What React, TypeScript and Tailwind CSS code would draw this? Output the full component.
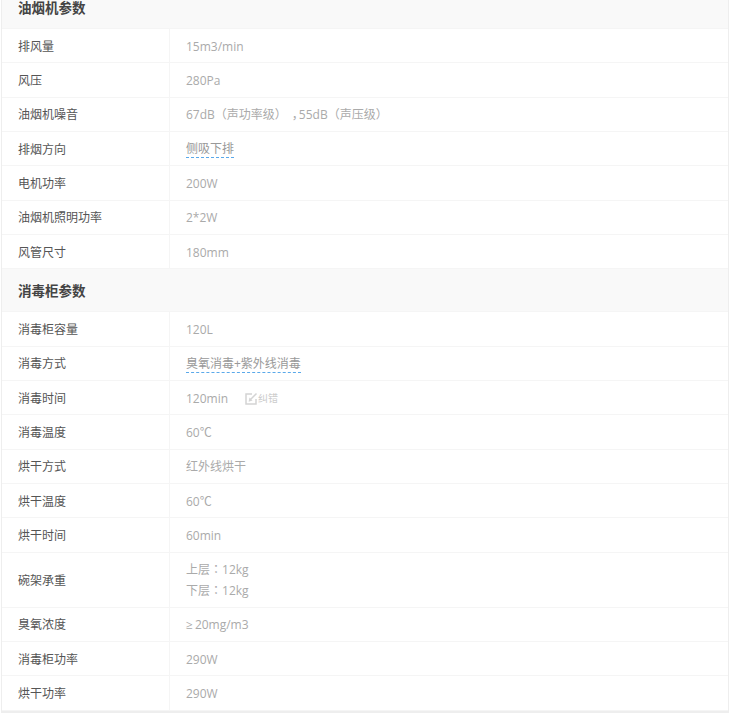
const F = { fontFamily: '"Open Sans","Noto Sans CJK SC",sans-serif' };

function Row({ label, children, h = "h-[34.33px]" }: { label: string; children: React.ReactNode; h?: string }) {
  return (
    <div className={`flex ${h} border-b border-[#f5f5f5]`}>
      <div className="w-[168px] shrink-0 flex items-center pl-4 pt-[2px] text-[12px] text-[#555] border-r border-[#f5f5f5]">{label}</div>
      <div className="flex-1 pl-4 pt-[2px] flex items-center text-[12px] text-[#aaa] [text-spacing-trim:space-all]">{children}</div>
    </div>
  );
}

function Head({ title, cls }: { title: string; cls: string }) {
  return (
    <div className={`${cls} bg-[#f9f9f9] flex items-center pl-4 pt-[2px] text-[13.5px] leading-[14px] font-bold text-[#444] border-b border-[#f5f5f5]`}>{title}</div>
  );
}

const Dash = ({ children }: { children: React.ReactNode }) => (
  <span className="border-b border-dashed border-[#5aa9ea] leading-[16px] text-[#999]">{children}</span>
);

const P = ({ children }: { children: React.ReactNode }) => (
  <span style={{ fontFamily: '"Noto Sans CJK TC",sans-serif' }}>{children}</span>
);

export default function App() {
  return (
    <div className="w-[730px] h-[719px] bg-white overflow-hidden" style={F}>
      <div className="-mt-[14px] mx-px w-[728px] border-x border-[#eeeeee] border-b-2">
        <Head title="油烟机参数" cls="h-[43px]" />
        <Row label="排风量">15m3/min</Row>
        <Row label="风压">280Pa</Row>
        <Row label="油烟机噪音"><span>67dB（声功率级）<span className="pl-[5px] tracking-[-5px]">，</span>55dB（声压级）</span></Row>
        <Row label="排烟方向"><Dash>侧吸下排</Dash></Row>
        <Row label="电机功率">200W</Row>
        <Row label="油烟机照明功率">2*2W</Row>
        <Row label="风管尺寸">180mm</Row>
        <Head title="消毒柜参数" cls="h-[43px]" />
        <Row label="消毒柜容量">120L</Row>
        <Row label="消毒方式"><Dash>臭氧消毒+紫外线消毒</Dash></Row>
        <Row label="消毒时间">
          120min
          <span className="ml-[17px] flex items-center text-[10px] text-[#ccc]">
            <svg width="13" height="13" viewBox="0 0 13 13" fill="none" stroke="#d4d4d4" strokeWidth="1.5">
              <path d="M11 7v5H1V2h6" />
              <path d="M5 8 11.5 1.5M4.6 8.6l.3-1.6 1.2 1.2z" />
            </svg>
            <span>纠错</span>
          </span>
        </Row>
        <Row label="消毒温度">60℃</Row>
        <Row label="烘干方式">红外线烘干</Row>
        <Row label="烘干温度">60℃</Row>
        <Row label="烘干时间">60min</Row>
        <Row label="碗架承重" h="h-[55px]">
          <div className="leading-[20px] pb-px">
            <div>上层<P>：</P>12kg</div>
            <div>下层<P>：</P>12kg</div>
          </div>
        </Row>
        <Row label="臭氧浓度"><span><span className="pr-[2px]">≥</span>20mg/m3</span></Row>
        <Row label="消毒柜功率">290W</Row>
        <Row label="烘干功率">290W</Row>
      </div>
    </div>
  );
}
